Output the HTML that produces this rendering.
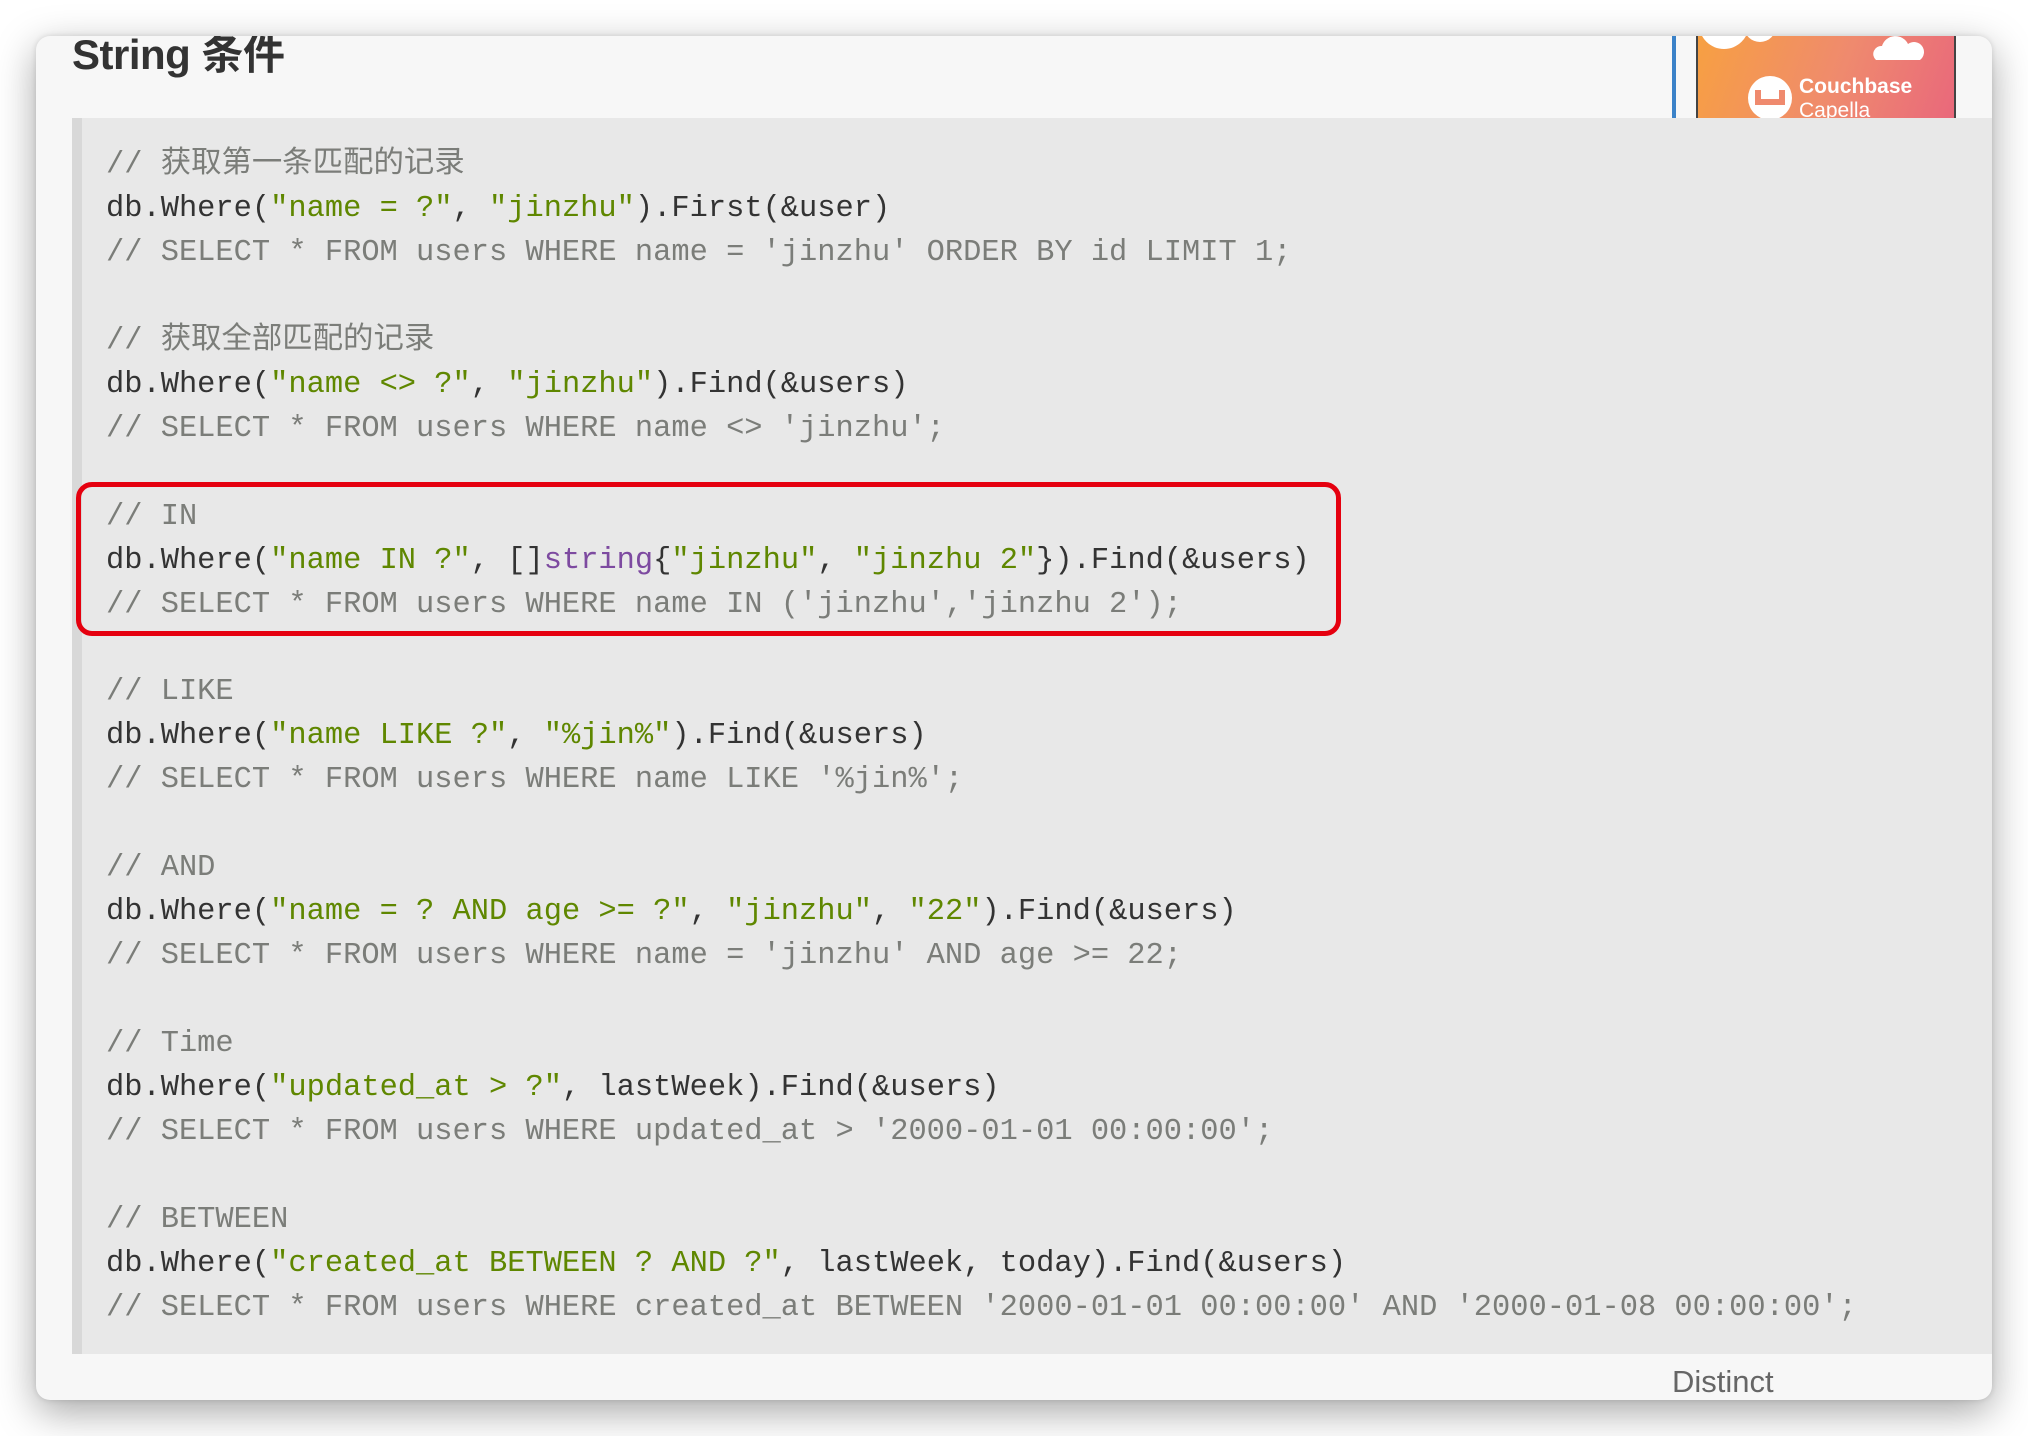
<!DOCTYPE html>
<html><head><meta charset="utf-8"><style>
html,body{margin:0;padding:0;width:2028px;height:1436px;background:#fff;overflow:hidden}
.win{position:absolute;left:36px;top:36px;width:1956px;height:1364px;background:#f7f7f7;border-radius:14px;box-shadow:0 12px 40px rgba(0,0,0,.35),0 0 6px rgba(0,0,0,.12);overflow:hidden}
.title{position:absolute;left:36px;top:-11px;font:bold 42px "Liberation Sans","Noto Sans CJK SC",sans-serif;color:#333;line-height:60px;letter-spacing:-0.5px}
.code{position:absolute;left:36px;top:82px;width:1940px;height:1236px;background:#e8e8e8;border-left:10px solid #d8d8d8;box-sizing:border-box}
pre{margin:0;position:absolute;left:24px;top:26px;font:30.4px "Liberation Mono","Noto Sans CJK SC",monospace;line-height:43.95px;color:#333}
.c{color:#7b7d79}.s{color:#5f8700}.k{color:#7d4aa0}
.red{position:absolute;border:5px solid #e5000f;border-radius:16px;box-sizing:border-box}
.blue{position:absolute;left:1636px;top:0;width:4px;height:82px;background:#3b82c8}
.ad{position:absolute;left:1660px;top:0;width:260px;height:82px;background:linear-gradient(110deg,#f7a042,#ef8a6e 55%,#e9687b);border-left:2px solid #444;border-right:2px solid #444;box-sizing:border-box;overflow:hidden}
.dist{position:absolute;left:1636px;top:1328px;font:31px "Liberation Sans",sans-serif;color:#666}
</style></head><body>
<div class="win">
<div class="title">String 条件</div>
<div class="blue"></div>
<div class="ad">
<svg width="260" height="82" style="position:absolute;left:0;top:0">
<circle cx="26" cy="-12" r="25" fill="#fff"/><circle cx="62" cy="-10" r="16" fill="#fff"/>
<path d="M178 24 a8 8 0 0 1 6 -14 a14 14 0 0 1 26 -2 a9 9 0 0 1 12 16 z" fill="#fff"/>
<circle cx="72" cy="62" r="22" fill="#fff"/>
<path d="M60 54 v12 h24 v-12" stroke="#ef8a6e" stroke-width="6" fill="none"/>
<text x="101" y="57" font-family="Liberation Sans" font-weight="bold" font-size="21" fill="#fff">Couchbase</text>
<text x="101" y="81" font-family="Liberation Sans" font-size="21" fill="#fff">Capella</text>
</svg></div>
<div class="code"><pre><span class="c">// 获取第一条匹配的记录</span>
db.Where(<span class="s">"name = ?"</span>, <span class="s">"jinzhu"</span>).First(&amp;user)
<span class="c">// SELECT * FROM users WHERE name = 'jinzhu' ORDER BY id LIMIT 1;</span>

<span class="c">// 获取全部匹配的记录</span>
db.Where(<span class="s">"name &lt;&gt; ?"</span>, <span class="s">"jinzhu"</span>).Find(&amp;users)
<span class="c">// SELECT * FROM users WHERE name &lt;&gt; 'jinzhu';</span>

<span class="c">// IN</span>
db.Where(<span class="s">"name IN ?"</span>, []<span class="k">string</span>{<span class="s">"jinzhu"</span>, <span class="s">"jinzhu 2"</span>}).Find(&amp;users)
<span class="c">// SELECT * FROM users WHERE name IN ('jinzhu','jinzhu 2');</span>

<span class="c">// LIKE</span>
db.Where(<span class="s">"name LIKE ?"</span>, <span class="s">"%jin%"</span>).Find(&amp;users)
<span class="c">// SELECT * FROM users WHERE name LIKE '%jin%';</span>

<span class="c">// AND</span>
db.Where(<span class="s">"name = ? AND age &gt;= ?"</span>, <span class="s">"jinzhu"</span>, <span class="s">"22"</span>).Find(&amp;users)
<span class="c">// SELECT * FROM users WHERE name = 'jinzhu' AND age &gt;= 22;</span>

<span class="c">// Time</span>
db.Where(<span class="s">"updated_at &gt; ?"</span>, lastWeek).Find(&amp;users)
<span class="c">// SELECT * FROM users WHERE updated_at &gt; '2000-01-01 00:00:00';</span>

<span class="c">// BETWEEN</span>
db.Where(<span class="s">"created_at BETWEEN ? AND ?"</span>, lastWeek, today).Find(&amp;users)
<span class="c">// SELECT * FROM users WHERE created_at BETWEEN '2000-01-01 00:00:00' AND '2000-01-08 00:00:00';</span></pre>
<div class="red" style="left:-6px;top:364px;width:1265px;height:154px"></div>
</div>
<div class="dist">Distinct</div>
</div>
</body></html>
